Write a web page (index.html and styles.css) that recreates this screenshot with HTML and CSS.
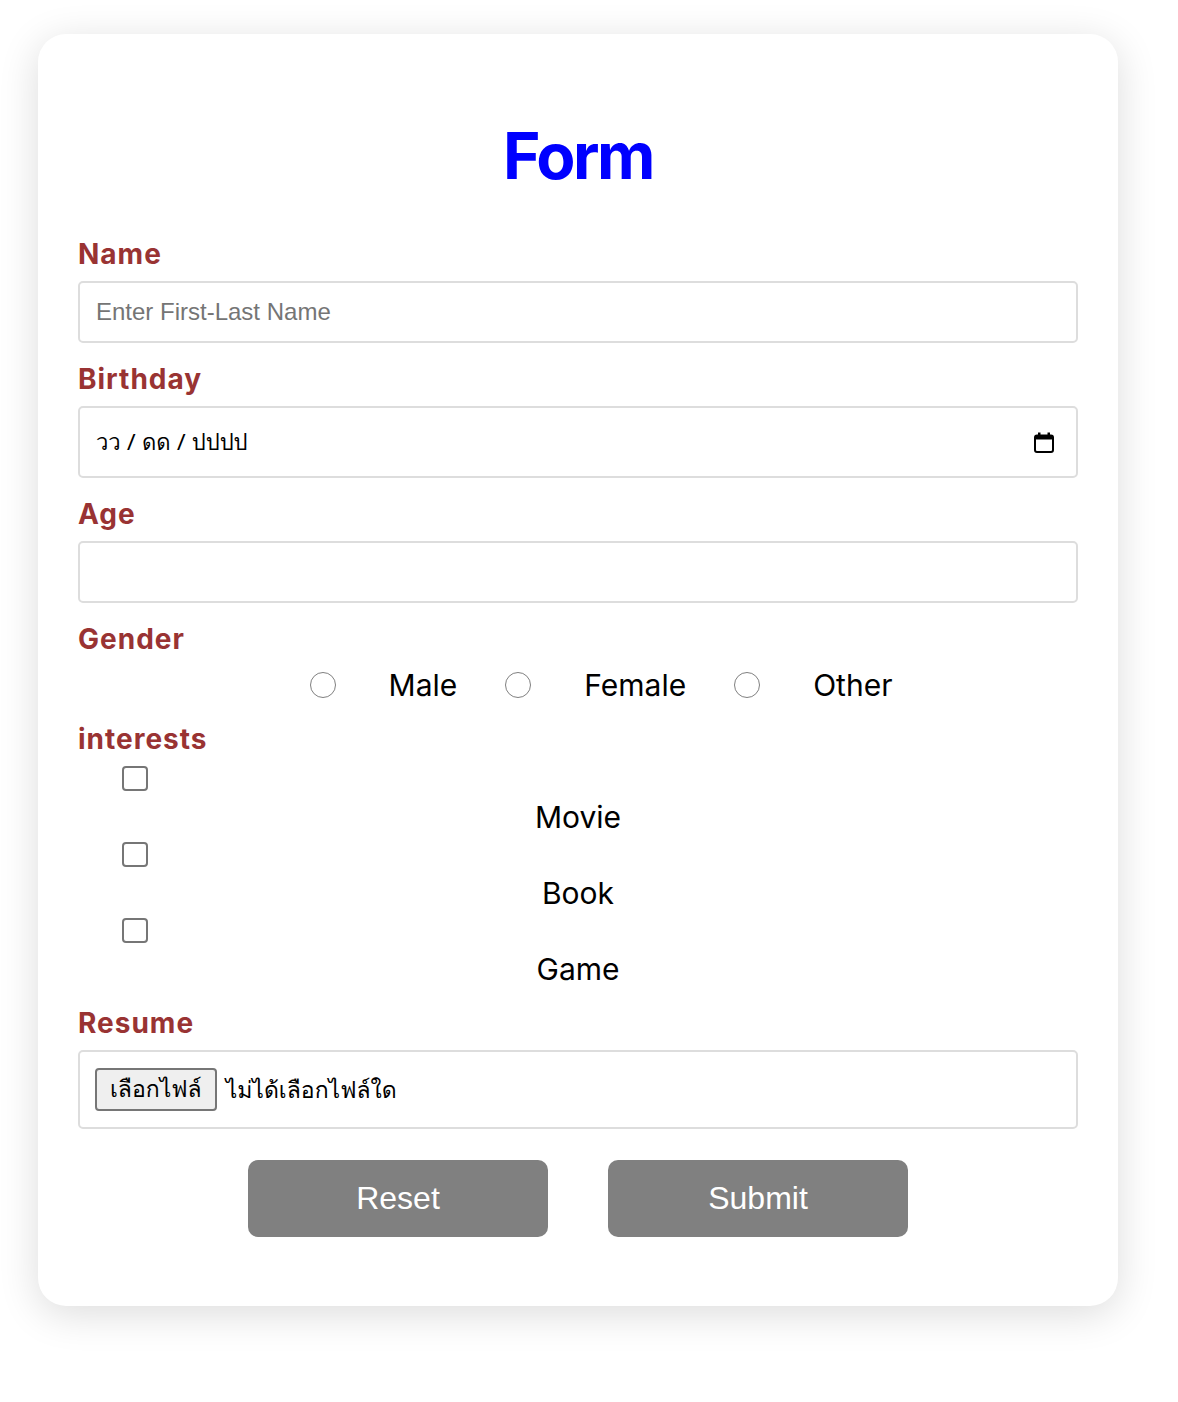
FILE: index.html
```html
<!DOCTYPE html>
<html lang="th">
<head>
  <meta charset="UTF-8">
  <meta name="viewport" content="width=device-width, initial-scale=1.0">
  <title>Form</title>
  <link rel="stylesheet" href="styles.css">
</head>
<body>
  <form class="card">
    <h1 class="title">Form</h1>

    <label class="field-label" for="name">Name</label>
    <input class="text-input" type="text" id="name" placeholder="Enter First-Last Name">

    <label class="field-label" for="birthday">Birthday</label>
    <div class="date-input" id="birthday">
      <span class="date-text">วว / ดด / ปปปป</span>
      <svg class="calendar-icon" width="20" height="21" viewBox="0 0 20 21">
        <rect x="1" y="3.5" width="18" height="16.5" rx="2" fill="none" stroke="#000" stroke-width="2"/>
        <rect x="1" y="3" width="18" height="4.5" rx="1.5" fill="#000"/>
        <rect x="4" y="0.5" width="2.5" height="4" fill="#000"/>
        <rect x="13.5" y="0.5" width="2.5" height="4" fill="#000"/>
      </svg>
    </div>

    <label class="field-label" for="age">Age</label>
    <input class="text-input" type="text" id="age">

    <div class="field-label">Gender</div>
    <div class="radio-row">
      <input class="radio" type="radio" name="gender" id="male">
      <label class="option-text radio-text" for="male">Male</label>
      <input class="radio" type="radio" name="gender" id="female">
      <label class="option-text radio-text" for="female">Female</label>
      <input class="radio" type="radio" name="gender" id="other">
      <label class="option-text radio-text" for="other">Other</label>
    </div>

    <div class="field-label">interests</div>
    <div class="interest">
      <input class="checkbox" type="checkbox" id="movie">
      <label class="option-text interest-text" for="movie">Movie</label>
    </div>
    <div class="interest">
      <input class="checkbox" type="checkbox" id="book">
      <label class="option-text interest-text" for="book">Book</label>
    </div>
    <div class="interest">
      <input class="checkbox" type="checkbox" id="game">
      <label class="option-text interest-text" for="game">Game</label>
    </div>

    <label class="field-label resume-label" for="resume">Resume</label>
    <div class="file-input" id="resume">
      <span class="file-button">เลือกไฟล์</span>
      <span class="file-name">ไม่ได้เลือกไฟล์ใด</span>
    </div>

    <div class="buttons">
      <button class="btn" type="reset">Reset</button>
      <button class="btn" type="submit">Submit</button>
    </div>
  </form>
</body>
</html>
```

FILE: styles.css
```css
body {
  margin: 0;
  padding: 34px 0 96px 38px;
  background-color: #fff;
  font-family: Inter, "Noto Sans", sans-serif;
}

.card {
  display: flex;
  flex-direction: column;
  width: 1080px;
  box-sizing: border-box;
  padding: 40px;
  background-color: #fff;
  border-radius: 28px;
  box-shadow: 0 8px 40px rgba(0, 0, 0, 0.14);
}

.title {
  margin: 44px 0 43px;
  font-size: 64px;
  line-height: 76px;
  font-weight: 700;
  letter-spacing: -2.5px;
  text-align: center;
  color: #0000ff;
}

.field-label {
  display: block;
  margin-bottom: 10px;
  font-size: 28px;
  line-height: 34px;
  font-weight: 700;
  letter-spacing: 1px;
  color: #993333;
}

.text-input,
.date-input,
.file-input {
  box-sizing: border-box;
  width: 100%;
  margin: 0 0 19px;
  border: 2px solid #dddddd;
  border-radius: 5px;
  background-color: #fff;
}

.text-input {
  height: 62px;
  padding: 0 16px;
  font-family: "Liberation Sans", Arial, sans-serif;
  font-size: 24px;
  color: #000;
}

.text-input::placeholder {
  color: #757575;
}

.date-input {
  display: flex;
  align-items: center;
  justify-content: space-between;
  height: 72px;
  padding: 0 22px 0 16px;
}

.date-text {
  font-family: Loma, Garuda, Waree, "Noto Sans Thai Looped", "Noto Sans Thai", "Noto Sans", sans-serif;
  font-size: 22px;
  color: #000;
}

.calendar-icon {
  display: block;
}

.radio-row {
  display: flex;
  align-items: center;
  justify-content: center;
  padding: 1px 0 19px 46px;
}

.radio {
  appearance: none;
  width: 26px;
  height: 26px;
  margin: 0 53px 0 0;
  border: 1.5px solid #808080;
  border-radius: 50%;
  background-color: #fff;
}

.radio-text {
  margin-right: 48px;
}

.radio-text:last-child {
  margin-right: 0;
}

.option-text {
  font-size: 30px;
  line-height: 36px;
  color: #000;
}

.interest {
  display: flex;
  flex-direction: column;
}

.checkbox {
  appearance: none;
  width: 26px;
  height: 25px;
  margin: 0 0 8px 44px;
  border: 2px solid #767676;
  border-radius: 4px;
  background-color: #fff;
}

.interest-text {
  margin-bottom: 7px;
  text-align: center;
}

.resume-label {
  margin-top: 12px;
}

.file-input {
  display: flex;
  align-items: center;
  gap: 9px;
  padding: 16px 15px;
  margin-bottom: 31px;
  font-family: Loma, Garuda, Waree, "Noto Sans Thai Looped", "Noto Sans Thai", "Noto Sans", sans-serif;
  font-size: 23px;
  color: #000;
}

.file-button {
  box-sizing: border-box;
  height: 43px;
  padding: 0 13px;
  line-height: 39px;
  border: 2px solid #767676;
  border-radius: 4px;
  background-color: #efefef;
}

.buttons {
  display: flex;
  justify-content: center;
  gap: 60px;
  margin-bottom: 29px;
}

.btn {
  width: 300px;
  height: 77px;
  border: none;
  border-radius: 10px;
  background-color: #808080;
  color: #fff;
  font-family: "Liberation Sans", Arial, sans-serif;
  font-size: 32px;
  cursor: pointer;
}
```
